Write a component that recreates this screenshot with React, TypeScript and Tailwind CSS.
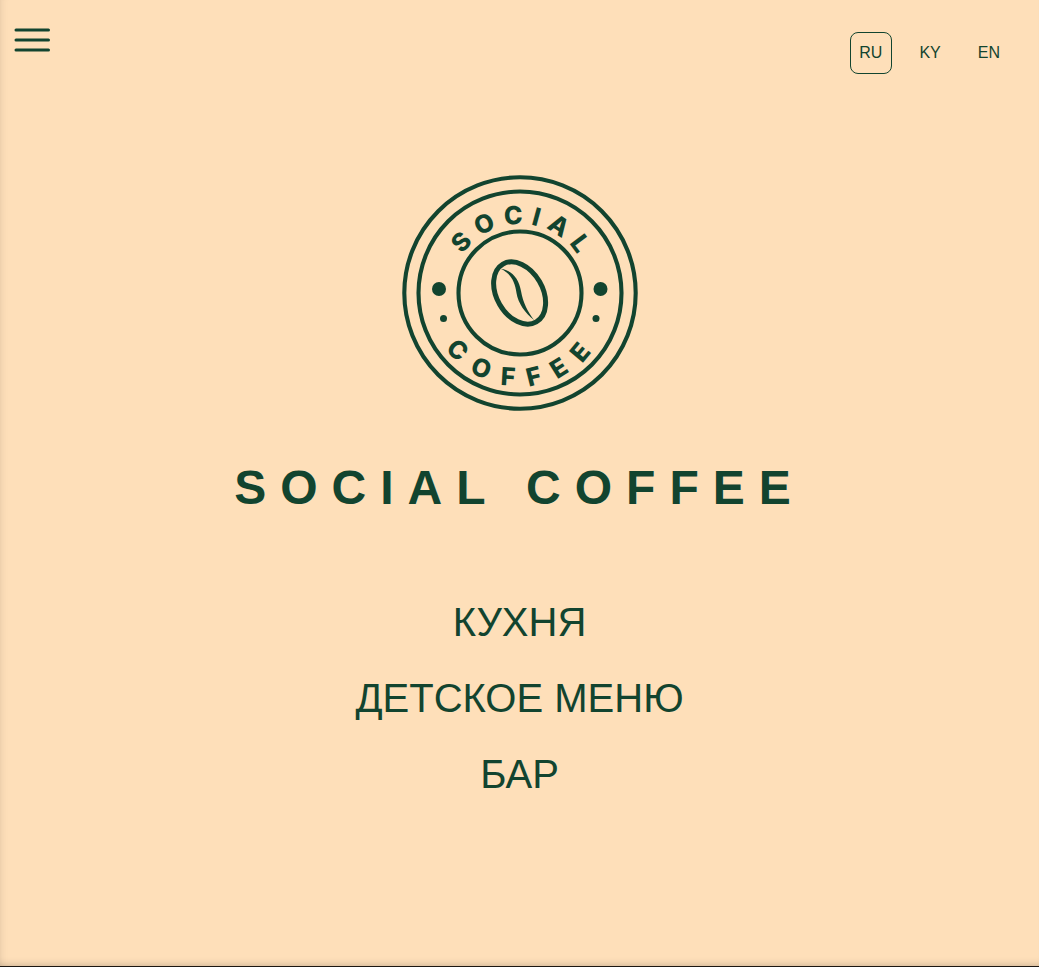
const bars = [30, 40, 50]

const Logo = () => (
  <svg width="240" height="240" viewBox="0 0 240 240" className="text-[#12442f]">
    <defs>
      <path id="top-arc" d="M 51 120 A 69 69 0 0 1 189 120" />
      <path id="bottom-arc" d="M 27 120 A 93 93 0 0 0 213 120" />
    </defs>
    <g fill="none" stroke="currentColor" strokeWidth="4.1">
      <circle cx="120" cy="120" r="115.7" />
      <circle cx="120" cy="120" r="101.5" />
      <circle cx="120" cy="120" r="61.5" />
    </g>
    <circle cx="39" cy="116" r="7" fill="currentColor" />
    <circle cx="200.5" cy="116" r="7" fill="currentColor" />
    <circle cx="43.5" cy="145.5" r="3.5" fill="currentColor" />
    <circle cx="196" cy="145.5" r="3.5" fill="currentColor" />
    <text fill="currentColor" fontFamily="Inter, sans-serif" fontWeight="800" fontSize="25" letterSpacing="8" textAnchor="middle">
      <textPath href="#top-arc" startOffset="51.8%">SOCIAL</textPath>
    </text>
    <text fill="currentColor" fontFamily="Inter, sans-serif" fontWeight="800" fontSize="25" letterSpacing="14" textAnchor="middle">
      <textPath href="#bottom-arc" startOffset="51.7%">COFFEE</textPath>
    </text>
    <ellipse cx="119.6" cy="120" rx="23" ry="33.4" transform="rotate(-30 119.6 120)" fill="none" stroke="currentColor" strokeWidth="5" />
    <path d="M 101 96 C 112 97 119 106 121 118 C 123 130 128 139 134 147 C 125 140 118 130 116.5 120 C 115 108 110 100 101 96 Z" fill="currentColor" />
  </svg>
)

export default function App() {
  return (
    <div className="h-[967px] w-full overflow-hidden bg-[#1c1712] font-['Liberation_Sans',sans-serif] text-[#12442f]">
      <div className="h-[966px] bg-[#fedfb9] shadow-[inset_8px_0_8px_-8px_rgba(0,0,0,0.12),inset_0_-8px_8px_-8px_rgba(0,0,0,0.25)]">
        <div className="flex items-start justify-between">
          <button className="ml-[14px] mt-[28px]">
            <svg width="36" height="24" viewBox="0 28 36 24" className="block">
              {bars.map((y) => (
                <line key={y} x1="2" y1={y} x2="34.5" y2={y} stroke="#12442f" strokeWidth="3" strokeLinecap="round" />
              ))}
            </svg>
          </button>
          <div className="mr-[29.5px] mt-[32px] flex items-center gap-[18px] text-base">
            <span className="flex h-[42px] items-center rounded-lg border border-[#12442f] px-[8.5px]">RU</span>
            <span className="flex h-[42px] items-center border border-transparent px-[8.5px]">KY</span>
            <span className="flex h-[42px] items-center border border-transparent px-[8.5px]">EN</span>
          </div>
        </div>
        <div className="mt-[99px] flex flex-col items-center">
          <Logo />
          <h1 className="mt-[47px] text-[48px] font-bold leading-[55px] tracking-[14px]">SOCIAL COFFEE</h1>
          <nav className="mt-[84px] flex flex-col items-center gap-[30px] text-[40px] leading-[46px]">
            <a>КУХНЯ</a>
            <a>ДЕТСКОЕ МЕНЮ</a>
            <a>БАР</a>
          </nav>
        </div>
      </div>
    </div>
  )
}
